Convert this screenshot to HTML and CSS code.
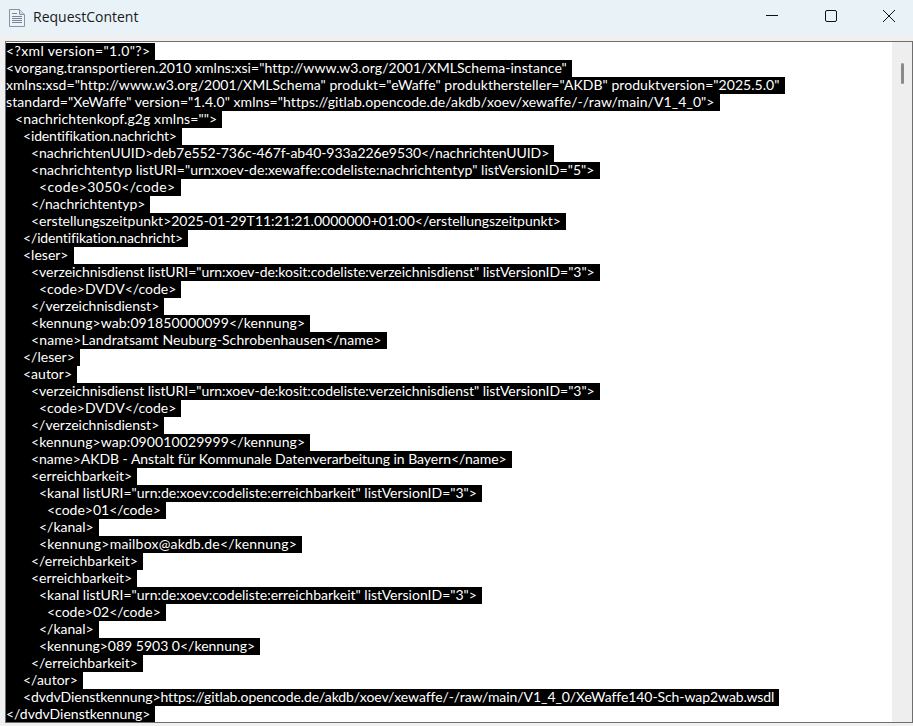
FILE: index.html
```html
<!DOCTYPE html>
<html lang="de">
<head>
<meta charset="utf-8">
<title>RequestContent</title>
<link rel="stylesheet" href="styles.css">
</head>
<body>
<div class="window">
  <header class="titlebar">
    <svg class="doc-icon" width="16" height="18" viewBox="0 0 16 18">
      <path d="M0.5 0.5H10.5L15.5 5.5V17.5H0.5Z" fill="#eef1f6" stroke="#8792a8"/>
      <path d="M10.5 0.5V5.5H15.5" fill="#cfd6e2" stroke="#8792a8"/>
      <path d="M3 4.5H8M3 7.5H13M3 9.5H13M3 11.5H13M3 13.5H13" stroke="#77839a" stroke-width="1"/>
    </svg>
    <span class="title">RequestContent</span>
    <div class="controls">
      <svg class="ctl" width="46" height="32" viewBox="0 0 46 32"><path d="M17 15.5H29" stroke="#111" fill="none"/></svg>
      <svg class="ctl" width="46" height="32" viewBox="0 0 46 32"><rect x="17.5" y="10.5" width="11" height="11" rx="1.5" stroke="#111" fill="none"/></svg>
      <svg class="ctl" width="46" height="32" viewBox="0 0 46 32"><path d="M17 10L29 22M29 10L17 22" stroke="#111" fill="none"/></svg>
    </div>
  </header>
  <main class="viewer">
    <div class="content">
      <div class="line"><span class="sel wide">&lt;?xml version="1.0"?&gt;</span></div>
      <div class="line"><span class="sel fit-a">&lt;vorgang.transportieren.2010 xmlns:xsi="http://www.w3.org/2001/XMLSchema-instance"</span></div>
      <div class="line"><span class="sel fit-a">xmlns:xsd="http://www.w3.org/2001/XMLSchema" produkt="eWaffe" produkthersteller="AKDB" produktversion="2025.5.0"</span></div>
      <div class="line"><span class="sel fit-b">standard="XeWaffe" version="1.4.0" xmlns="https://gitlab.opencode.de/akdb/xoev/xewaffe/-/raw/main/V1_4_0"&gt;</span></div>
      <div class="line"><span class="sel i1 fit-c">&lt;nachrichtenkopf.g2g xmlns=""&gt;</span></div>
      <div class="line"><span class="sel i2 fit-e">&lt;identifikation.nachricht&gt;</span></div>
      <div class="line"><span class="sel i3 fit-m">&lt;nachrichtenUUID&gt;deb7e552-736c-467f-ab40-933a226e9530&lt;/nachrichtenUUID&gt;</span></div>
      <div class="line"><span class="sel i3 fit-a">&lt;nachrichtentyp listURI="urn:xoev-de:xewaffe:codeliste:nachrichtentyp" listVersionID="5"&gt;</span></div>
      <div class="line"><span class="sel i4 wide">&lt;code&gt;3050&lt;/code&gt;</span></div>
      <div class="line"><span class="sel i3">&lt;/nachrichtentyp&gt;</span></div>
      <div class="line"><span class="sel i3">&lt;erstellungszeitpunkt&gt;2025-01-29T11:21:21.0000000+01:00&lt;/erstellungszeitpunkt&gt;</span></div>
      <div class="line"><span class="sel i2 fit-e">&lt;/identifikation.nachricht&gt;</span></div>
      <div class="line"><span class="sel i2">&lt;leser&gt;</span></div>
      <div class="line"><span class="sel i3 fit-n">&lt;verzeichnisdienst listURI="urn:xoev-de:kosit:codeliste:verzeichnisdienst" listVersionID="3"&gt;</span></div>
      <div class="line"><span class="sel i4">&lt;code&gt;DVDV&lt;/code&gt;</span></div>
      <div class="line"><span class="sel i3">&lt;/verzeichnisdienst&gt;</span></div>
      <div class="line"><span class="sel i3 fit-c">&lt;kennung&gt;wab:091850000099&lt;/kennung&gt;</span></div>
      <div class="line"><span class="sel i3 fit-c">&lt;name&gt;Landratsamt Neuburg-Schrobenhausen&lt;/name&gt;</span></div>
      <div class="line"><span class="sel i2">&lt;/leser&gt;</span></div>
      <div class="line"><span class="sel i2">&lt;autor&gt;</span></div>
      <div class="line"><span class="sel i3 fit-n">&lt;verzeichnisdienst listURI="urn:xoev-de:kosit:codeliste:verzeichnisdienst" listVersionID="3"&gt;</span></div>
      <div class="line"><span class="sel i4">&lt;code&gt;DVDV&lt;/code&gt;</span></div>
      <div class="line"><span class="sel i3">&lt;/verzeichnisdienst&gt;</span></div>
      <div class="line"><span class="sel i3 fit-c">&lt;kennung&gt;wap:090010029999&lt;/kennung&gt;</span></div>
      <div class="line"><span class="sel i3 fit-n">&lt;name&gt;AKDB - Anstalt für Kommunale Datenverarbeitung in Bayern&lt;/name&gt;</span></div>
      <div class="line"><span class="sel i3">&lt;erreichbarkeit&gt;</span></div>
      <div class="line"><span class="sel i4">&lt;kanal listURI="urn:de:xoev:codeliste:erreichbarkeit" listVersionID="3"&gt;</span></div>
      <div class="line"><span class="sel i5">&lt;code&gt;01&lt;/code&gt;</span></div>
      <div class="line"><span class="sel i4">&lt;/kanal&gt;</span></div>
      <div class="line"><span class="sel i4 fit-d">&lt;kennung&gt;mailbox@akdb.de&lt;/kennung&gt;</span></div>
      <div class="line"><span class="sel i3">&lt;/erreichbarkeit&gt;</span></div>
      <div class="line"><span class="sel i3">&lt;erreichbarkeit&gt;</span></div>
      <div class="line"><span class="sel i4">&lt;kanal listURI="urn:de:xoev:codeliste:erreichbarkeit" listVersionID="3"&gt;</span></div>
      <div class="line"><span class="sel i5">&lt;code&gt;02&lt;/code&gt;</span></div>
      <div class="line"><span class="sel i4">&lt;/kanal&gt;</span></div>
      <div class="line"><span class="sel i4">&lt;kennung&gt;089 5903 0&lt;/kennung&gt;</span></div>
      <div class="line"><span class="sel i3">&lt;/erreichbarkeit&gt;</span></div>
      <div class="line"><span class="sel i2">&lt;/autor&gt;</span></div>
      <div class="line"><span class="sel i2 fit-m">&lt;dvdvDienstkennung&gt;https://gitlab.opencode.de/akdb/xoev/xewaffe/-/raw/main/V1_4_0/XeWaffe140-Sch-wap2wab.wsdl</span></div>
      <div class="line"><span class="sel">&lt;/dvdvDienstkennung&gt;</span></div>
    </div>
    <div class="scrollbar"><div class="thumb"></div></div>
  </main>
</div>
</body>
</html>
```
FILE: styles.css
```css
* { box-sizing: border-box; }
html, body { margin: 0; height: 100%; overflow: hidden; background: #f0f0f0; }
.window { height: 726px; display: flex; flex-direction: column; background: #f0f0f0; }
.titlebar {
  height: 35px; flex: none; display: flex; align-items: center;
  background: #e9f2f7; padding-left: 9px; padding-right: 1px;
  font: 14px "Open Sans", "Liberation Sans", sans-serif; color: #1a1a1a;
}
.doc-icon { flex: none; }
.title { margin-left: 8px; position: relative; top: -1px; }
.controls { margin-left: auto; align-self: flex-start; display: flex; gap: 12.5px; }
.ctl { display: block; }
.viewer {
  margin: 6px 0 3px 5px; width: 908px; height: 682px; flex: none;
  border: 1px solid #6e6e6e; background: #fff; display: flex; overflow: hidden;
}
.content { flex: 1; min-width: 0; padding-top: 1px; overflow: hidden; }
.line { height: 17px; white-space: nowrap; font: 14px/16px Lato, "Open Sans", sans-serif; font-variant-ligatures: none; }
.sel { display: inline-block; height: 17px; background: #000; color: #fff; padding-right: 5px; }
.wide { letter-spacing: 0.38px; }
.fit-a { letter-spacing: 0.05px; }
.fit-b { letter-spacing: 0.07px; }
.fit-c { letter-spacing: 0.1px; }
.fit-d { letter-spacing: 0.2px; }
.fit-n { letter-spacing: -0.03px; }
.fit-m { letter-spacing: -0.07px; }
.fit-e { letter-spacing: -0.15px; }
.i1 { padding-left: 9px; }
.i2 { padding-left: 17px; }
.i3 { padding-left: 25px; }
.i4 { padding-left: 33px; }
.i5 { padding-left: 41px; }
.scrollbar { width: 20px; flex: none; background: #eeeeee; padding-top: 21px; display: flex; justify-content: center; }
.thumb { width: 3px; height: 21px; background: #8a8a8a; border-radius: 2px; }
```
